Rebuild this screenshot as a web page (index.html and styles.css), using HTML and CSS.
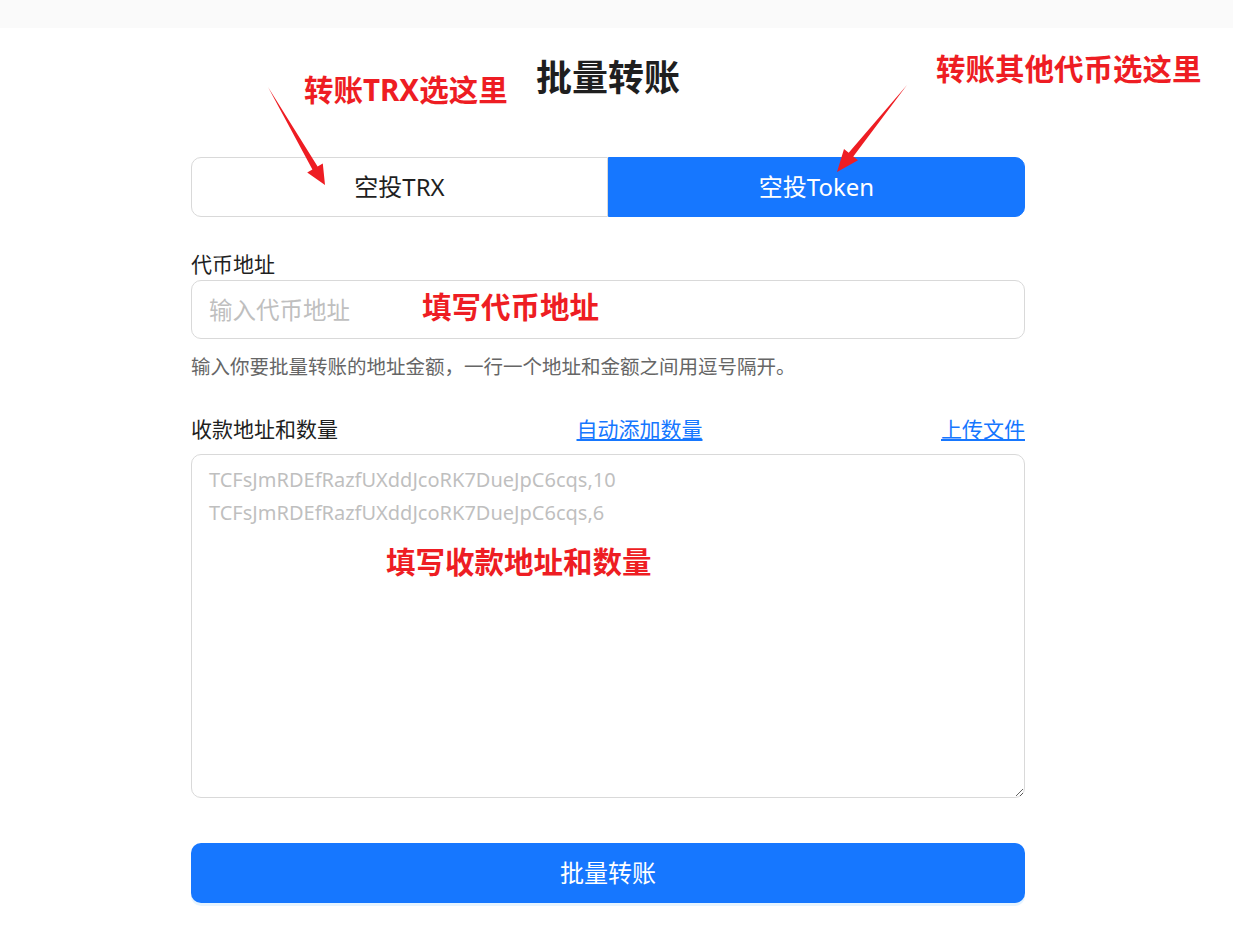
FILE: index.html
```html
<!DOCTYPE html>
<html lang="zh-CN">
<head>
<meta charset="UTF-8" />
<meta name="viewport" content="width=device-width, initial-scale=1" />
<title>批量转账</title>
<link rel="stylesheet" href="styles.css">
</head>
<body>
<div class="page">
  <div class="topbar"></div>

  <!-- форма -->
  <main class="transfer">
    <h1 class="transfer-title">批量转账</h1>
    <div class="tabs">
      <button class="tab">空投TRX</button>
      <button class="tab active">空投Token</button>
    </div>

    <label class="field-label" for="token">代币地址</label>
    <input class="field-input" id="token" type="text" placeholder="输入代币地址">
    <p class="hint">输入你要批量转账的地址金额，一行一个地址和金额之间用逗号隔开。</p>

    <div class="list-head">
      <span class="field-label">收款地址和数量</span>
      <a href="#" class="link">自动添加数量</a>
      <a href="#" class="link">上传文件</a>
    </div>
    <textarea class="list-input" placeholder="TCFsJmRDEfRazfUXddJcoRK7DueJpC6cqs,10&#10;TCFsJmRDEfRazfUXddJcoRK7DueJpC6cqs,6"></textarea>

    <button class="submit-btn">批量转账</button>
  </main>

  <!-- подсказки поверх формы -->
  <div class="note note-trx">转账TRX选这里</div>
  <div class="note note-token">转账其他代币选这里</div>
  <div class="note note-address">填写代币地址</div>
  <div class="note note-list">填写收款地址和数量</div>
  <svg class="arrows" width="1233" height="300" viewBox="0 0 1233 300">
    <polygon points="268,87 317.6,166.5 322.8,163.5 325,185 307.2,172.5 312.4,169.5" fill="#ee1d23"/>
    <polygon points="907,85 853.3,156.5 858,160.2 837,172 844,149 848.7,152.7" fill="#ee1d23"/>
  </svg>
</div>
</body>
</html>
```

FILE: styles.css
```css
/* общие стили */
html, body {
  margin: 0;
  padding: 0;
  background: #fff;
  font-family: "Noto Sans", "Noto Sans CJK SC", sans-serif;
  color: #1f1f1f;
}
.page {
  position: relative;
  width: 1216px;
  min-height: 936px;
}
.topbar {
  height: 28px;
  width: 1233px;
  background: #fafafa;
}

/* форма */
.transfer {
  width: 834px;
  margin: 0 auto;
  display: flex;
  flex-direction: column;
}
.transfer-title {
  margin: 26px 0 0;
  font-size: 36px;
  line-height: 48px;
  font-weight: 700;
  text-align: center;
  color: #1f1f1f;
}
.tabs {
  display: flex;
  margin-top: 55px;
  height: 60px;
}
.tab {
  flex: 1;
  border: 1px solid #d9d9d9;
  background: #fff;
  font-family: inherit;
  font-size: 24px;
  color: #1f1f1f;
  cursor: pointer;
  padding: 0 0 3px;
}
.tab:first-child {
  border-radius: 10px 0 0 10px;
}
.tab:last-child {
  border-radius: 0 10px 10px 0;
}
.tab.active {
  background: #1677ff;
  border-color: #1677ff;
  color: #fff;
}
.field-label {
  display: block;
  margin-top: 31px;
  font-size: 21px;
  line-height: 32px;
  color: #1f1f1f;
}
.field-input {
  box-sizing: border-box;
  height: 59px;
  padding: 0 17px;
  border: 1px solid #d9d9d9;
  border-radius: 10px;
  font-family: inherit;
  font-size: 23.5px;
  outline: none;
}
.field-input::placeholder,
.list-input::placeholder {
  color: #bfbfbf;
}
.hint {
  margin: 13px 0 0;
  font-size: 19.5px;
  line-height: 30px;
  color: #666;
}
.list-head {
  display: flex;
  justify-content: space-between;
  align-items: center;
  margin-top: 31px;
  height: 32px;
}
.list-head .field-label {
  margin-top: 0;
}
.link {
  font-size: 21px;
  line-height: 32px;
  color: #1677ff;
  text-decoration: underline;
}
.list-input {
  box-sizing: border-box;
  margin-top: 9px;
  height: 344px;
  padding: 8px 17px;
  border: 1px solid #d9d9d9;
  border-radius: 10px;
  font-family: inherit;
  font-size: 20px;
  line-height: 33px;
  outline: none;
  resize: vertical;
}
.submit-btn {
  margin-top: 45px;
  height: 60px;
  border: none;
  border-radius: 10px;
  background: #1677ff;
  color: #fff;
  font-family: inherit;
  font-size: 24px;
  padding: 0 0 3px;
  cursor: pointer;
  box-shadow: 0 3px 0 rgba(5, 145, 255, 0.1);
}

/* красные подсказки */
.note {
  position: absolute;
  font-size: 29.5px;
  line-height: 40px;
  font-weight: 700;
  color: #ee1d23;
  white-space: nowrap;
}
.note-trx { left: 304px; top: 70px; }
.note-token { left: 936px; top: 49px; }
.note-address { left: 422px; top: 287px; }
.note-list { left: 386px; top: 542px; }
.arrows {
  position: absolute;
  left: 0;
  top: 0;
  pointer-events: none;
}
```
